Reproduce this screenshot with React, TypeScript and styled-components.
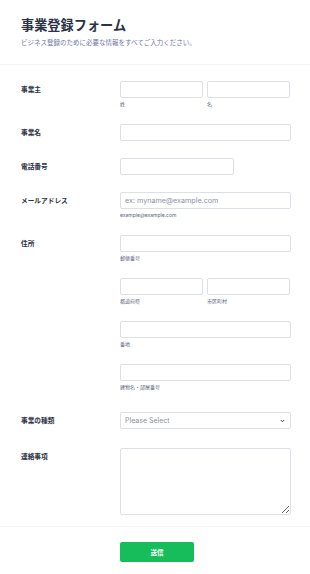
import React from "react";
import styled, { createGlobalStyle } from "styled-components";

const GlobalStyle = createGlobalStyle`
  html, body {
    margin: 0;
    padding: 0;
    background: #ffffff;
  }
  body {
    font-family: Inter, "Noto Sans CJK JP", sans-serif;
    color: #2c3345;
  }
  * {
    box-sizing: border-box;
  }
`;

const Page = styled.div`
  width: 310px;
  background: #ffffff;
`;

const Header = styled.header`
  padding: 15px 21px 16px;
  border-bottom: 1px solid #f3f3f5;
`;

const Title = styled.h1`
  margin: 0;
  font-size: 13.2px;
  line-height: 20px;
  font-weight: 700;
  color: #2c3345;
`;

const Subtitle = styled.p`
  margin: 3px 0 0;
  font-size: 6.5px;
  line-height: 10px;
  color: #6f76a7;
`;

const Body = styled.div`
  padding: 7px 0 3px 21px;
  border-bottom: 1px solid #f3f3f5;
`;

const Row = styled.div<{ $pb?: number }>`
  display: grid;
  grid-template-columns: 99px 171px;
  padding: 9px 0 ${(p) => p.$pb ?? 8}px;
`;

const Label = styled.label`
  font-size: 6.7px;
  line-height: 10px;
  font-weight: 600;
  color: #2c3345;
  padding-top: 4px;
`;

const Fields = styled.div`
  display: flex;
  flex-direction: column;
  gap: 17px;
`;

const Pair = styled.div`
  display: grid;
  grid-template-columns: 83px 83px;
  column-gap: 4px;
`;

const Field = styled.div`
  display: flex;
  flex-direction: column;
`;

const Input = styled.input<{ $w?: number }>`
  width: ${(p) => (p.$w ? `${p.$w}px` : "100%")};
  height: 17px;
  border: 1px solid #dcdfe6;
  border-radius: 2px;
  padding: 0 4px;
  font-family: Inter, "Noto Sans CJK JP", sans-serif;
  font-size: 7.2px;
  color: #2c3345;
  outline: none;
  background: #fff;

  &::placeholder {
    color: #8d8fa8;
  }
`;

const Sub = styled.span`
  margin-top: 4px;
  font-size: 5px;
  line-height: 5px;
  color: #57647e;
  white-space: nowrap;
`;

const SelectBox = styled.div`
  position: relative;
  width: 171px;
  height: 17px;
  border: 1px solid #dcdfe6;
  border-radius: 2px;
  display: flex;
  align-items: center;
  justify-content: space-between;
  padding: 0 5px 0 4px;
  font-size: 7px;
  color: #8d8fa8;
`;

const TextArea = styled.textarea`
  width: 171px;
  height: 67px;
  border: 1px solid #dcdfe6;
  border-radius: 2px;
  outline: none;
  font-family: Inter, "Noto Sans CJK JP", sans-serif;
  font-size: 7px;
  padding: 4px;
  display: block;
`;

const Footer = styled.div`
  padding: 12px 0 16px 120px;
`;

const SubmitButton = styled.button`
  width: 74px;
  height: 20px;
  border: none;
  border-radius: 2px;
  background: #18bd5b;
  color: #ffffff;
  font-family: Inter, "Noto Sans CJK JP", sans-serif;
  font-size: 6.5px;
  font-weight: 700;
  cursor: pointer;
`;

const Chevron = () => (
  <svg width="5" height="4" viewBox="0 0 10 8" fill="none">
    <path d="M1.5 2 L5 5.5 L8.5 2" stroke="#2c3345" strokeWidth="1.8" />
  </svg>
);

const SingleField: React.FC<{ sub?: string; placeholder?: string; w?: number }> = ({
  sub,
  placeholder,
  w,
}) => (
  <Field>
    <Input $w={w} placeholder={placeholder} />
    {sub && <Sub>{sub}</Sub>}
  </Field>
);

export default function App() {
  return (
    <Page>
      <GlobalStyle />
      <Header>
        <Title>事業登録フォーム</Title>
        <Subtitle>ビジネス登録のために必要な情報をすべてご入力ください。</Subtitle>
      </Header>
      <Body>
        <Row>
          <Label>事業主</Label>
          <Pair>
            <SingleField sub="姓" />
            <SingleField sub="名" />
          </Pair>
        </Row>
        <Row>
          <Label>事業名</Label>
          <SingleField />
        </Row>
        <Row>
          <Label>電話番号</Label>
          <SingleField w={114} />
        </Row>
        <Row>
          <Label>メールアドレス</Label>
          <SingleField placeholder="ex: myname@example.com" sub="example@example.com" />
        </Row>
        <Row $pb={13}>
          <Label>住所</Label>
          <Fields>
            <SingleField sub="郵便番号" />
            <Pair>
              <SingleField sub="都道府県" />
              <SingleField sub="市区町村" />
            </Pair>
            <SingleField sub="番地" />
            <SingleField sub="建物名・部屋番号" />
          </Fields>
        </Row>
        <Row $pb={10}>
          <Label>事業の種類</Label>
          <SelectBox>
            <span>Please Select</span>
            <Chevron />
          </SelectBox>
        </Row>
        <Row>
          <Label>連絡事項</Label>
          <TextArea />
        </Row>
      </Body>
      <Footer>
        <SubmitButton>送信</SubmitButton>
      </Footer>
    </Page>
  );
}
